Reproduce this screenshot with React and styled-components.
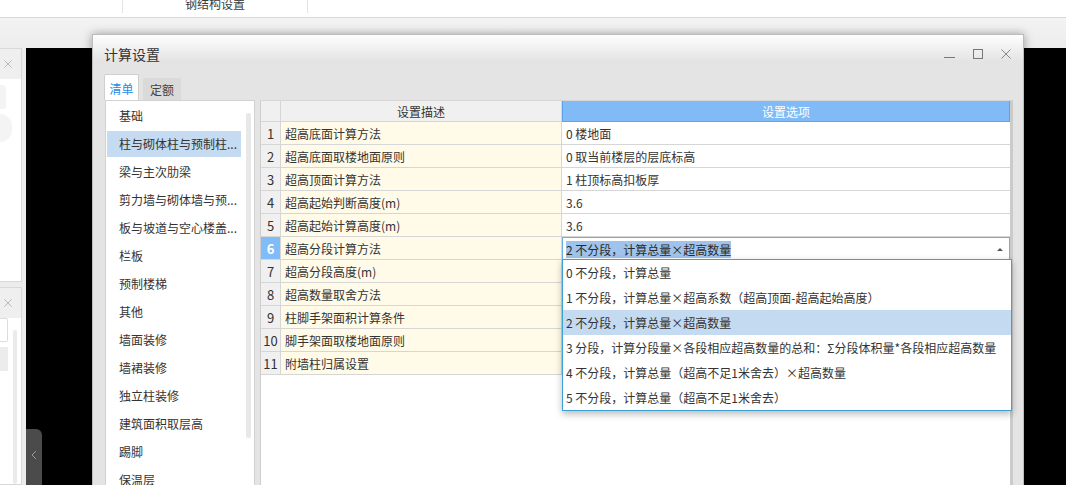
import React from 'react';
import styled, { createGlobalStyle } from 'styled-components';

const GlobalStyle = createGlobalStyle`
  * { box-sizing: border-box; }
  html, body { margin: 0; padding: 0; width: 1066px; height: 485px; overflow: hidden; background: #f0f0f0; }
  body { font-family: "Noto Sans CJK SC", "Microsoft YaHei", sans-serif; font-size: 12px; color: #333; }
  #root { width: 1066px; height: 485px; overflow: hidden; }
`;

const Screen = styled.div`
  position: relative;
  width: 1066px;
  height: 485px;
  display: flex;
  flex-direction: column;
  overflow: hidden;
`;

const TopBar = styled.div`
  height: 18px;
  flex: none;
  background: #fff;
  border-bottom: 1px solid #d9d9d9;
  display: flex;
`;

const TopCell = styled.div`
  width: ${p => p.$w}px;
  height: 13px;
  border-right: 1px solid #e3e3e3;
  display: flex;
  justify-content: center;
  overflow: hidden;
`;

const TopLabel = styled.span`
  font-size: 12px;
  line-height: 12px;
  margin-top: -2px;
  color: #3a3a3a;
  white-space: nowrap;
`;

const Workspace = styled.div`
  flex: 1;
  display: flex;
  gap: 4px;
  padding-top: 30px;
  background: linear-gradient(#f3f3f3, #ececec 31px);
  min-height: 0;
`;

const Dock = styled.div`
  width: 22px;
  flex: none;
  display: flex;
  flex-direction: column;
  gap: 5px;
`;

const DockPanel = styled.div`
  height: ${p => (p.$h ? `${p.$h}px` : 'auto')};
  flex: ${p => (p.$h ? 'none' : '1')};
  background: #fff;
  border: 1px solid #d8d8d8;
  border-left: none;
  display: flex;
  flex-direction: column;
  overflow: hidden;
`;

const DockHeader = styled.div`
  height: 30px;
  flex: none;
  background: #efefef;
  display: flex;
  align-items: center;
  justify-content: flex-end;
  padding-right: 9px;
`;

const DockBody = styled.div`
  flex: 1;
  display: flex;
  gap: 5px;
  padding-top: ${p => p.$pt || 0}px;
`;

const DockStack = styled.div`
  display: flex;
  flex-direction: column;
  gap: 5px;
`;

const GhostBlock = styled.div`
  width: ${p => p.$w}px;
  height: ${p => p.$h}px;
  background: ${p => p.$bg || '#f4f4f4'};
  border: ${p => (p.$bd ? '1px solid #dcdcdc' : 'none')};
  border-left: none;
  border-radius: ${p => p.$r || '0 3px 3px 0'};
`;

const DockScroll = styled.div`
  width: 4px;
  margin-top: 12px;
  background: #ebebeb;
  border-radius: 2px;
`;

const Viewport = styled.div`
  flex: 1;
  position: relative;
  background: #000;
`;

const CollapseTab = styled.div`
  position: absolute;
  left: 0;
  bottom: 0;
  width: 16px;
  height: 56px;
  background: #4b4b4b;
  border-radius: 0 6px 0 0;
  display: flex;
  align-items: center;
  justify-content: center;
  padding-bottom: 4px;
`;

/* ---------- Dialog (floating window) ---------- */

const Dialog = styled.div`
  position: absolute;
  left: 92px;
  top: 34px;
  width: 932px;
  height: 470px;
  border: 1px solid #bcbcbc;
  background: linear-gradient(#fefefe 0, #e4e4e4 26px, #e4e4e4 100%);
  box-shadow: 0 0 9px rgba(0, 0, 0, 0.35);
  display: flex;
  flex-direction: column;
`;

const TitleBar = styled.div`
  height: 37px;
  flex: none;
  display: flex;
  align-items: center;
  padding: 0 12px 0 11px;
`;

const Title = styled.div`
  flex: 1;
  font-size: 14px;
  color: #333;
  line-height: 16px;
  padding-top: 1px;
`;

const Controls = styled.div`
  display: flex;
  gap: 18px;
  align-items: center;
`;

const TabBar = styled.div`
  height: 28px;
  flex: none;
  display: flex;
  align-items: flex-end;
  gap: 4px;
  padding-left: 11px;
`;

const Tab = styled.div`
  height: ${p => (p.$active ? 26 : 22)}px;
  width: ${p => (p.$active ? 35 : 38)}px;
  background: ${p => (p.$active ? '#fff' : '#dadada')};
  border: 1px solid ${p => (p.$active ? '#cfcfcf' : '#dadada')};
  border-bottom: none;
  border-radius: 2px 2px 0 0;
  color: ${p => (p.$active ? '#2a8ae6' : '#444')};
  display: flex;
  align-items: center;
  justify-content: center;
  font-size: 12px;
  padding-top: ${p => (p.$active ? 1 : 0)}px;
`;

const Body = styled.div`
  flex: 1;
  display: flex;
  gap: 5px;
  padding: 0 10px 0 12px;
  min-height: 0;
`;

const ListPanel = styled.div`
  width: 150px;
  flex: none;
  background: #fff;
  border: 1px solid #d2d2d2;
  border-bottom: none;
  display: flex;
`;

const ListItems = styled.div`
  flex: 1;
  padding: 2px 2px 0 1px;
  display: flex;
  flex-direction: column;
  gap: 2px;
`;

const ListItem = styled.div`
  height: 26px;
  flex: none;
  line-height: 26px;
  padding-left: 12px;
  background: ${p => (p.$selected ? '#c4dbf1' : 'transparent')};
  color: #333;
  white-space: nowrap;
  overflow: hidden;
`;

const ScrollTrack = styled.div`
  width: 11px;
  flex: none;
  padding: 12px 3px 0 3px;
`;

const ScrollThumb = styled.div`
  height: 325px;
  background: #e8e8e8;
  border-radius: 2px;
`;

const TablePanel = styled.div`
  flex: 1;
  background: #fff;
  border-left: 1px solid #cdcdcd;
  border-right: 3px solid #cbcbcb;
  border-top: 1px solid #d6d6d6;
  min-width: 0;
`;

const Grid = styled.div`
  display: grid;
  grid-template-columns: 20px 281px 1fr;
`;

const HeadCell = styled.div`
  height: 21px;
  display: flex;
  align-items: center;
  justify-content: center;
  background: ${p => (p.$blue ? '#80bbf7' : '#f0f0f0')};
  color: ${p => (p.$blue ? '#fff' : '#333')};
  border-right: 1px solid ${p => (p.$blue ? '#5ea4ea' : '#d6d6d6')};
  border-bottom: 1px solid ${p => (p.$blue ? '#5ea4ea' : '#d6d6d6')};
  border-left: ${p => (p.$blue ? '1px solid #5ea4ea' : 'none')};
`;

const NumCell = styled.div`
  height: 23px;
  display: flex;
  align-items: center;
  justify-content: center;
  background: ${p => (p.$active ? '#80bcf8' : '#f0f0f0')};
  color: ${p => (p.$active ? '#fff' : '#333')};
  font-weight: ${p => (p.$active ? 700 : 400)};
  border-right: 1px solid #d6d6d6;
  border-bottom: 1px solid #d6d6d6;
  font-size: 13px;
`;

const DescCell = styled.div`
  height: 23px;
  display: flex;
  align-items: center;
  padding-left: 4px;
  background: #fffbe8;
  border-right: 1px solid #d6d6d6;
  border-bottom: 1px solid #d6d6d6;
  white-space: nowrap;
`;

const OptCell = styled.div`
  position: relative;
  height: 23px;
  display: flex;
  align-items: center;
  padding-left: 4px;
  background: #fff;
  border-bottom: 1px solid #d6d6d6;
  white-space: nowrap;
`;

const EditCell = styled.div`
  position: relative;
  z-index: 5;
  height: 23px;
  display: flex;
  align-items: center;
  padding: 0 6px 0 3px;
  background: #fff;
  border: 1px solid #6aaeea;
`;

const Selected = styled.span`
  background: #9fc3ea;
  color: #2a2a2a;
  line-height: 17px;
  height: 17px;
  margin-top: 1px;
`;

const ArrowUp = styled.span`
  margin-left: auto;
  margin-top: 2px;
  width: 0;
  height: 0;
  border-left: 3px solid transparent;
  border-right: 3px solid transparent;
  border-bottom: 3px solid #555;
`;

const Dropdown = styled.div`
  position: absolute;
  left: -1px;
  top: 21px;
  width: 450px;
  background: #fff;
  border: 1px solid #3ba2d9;
  box-shadow: 0 3px 7px rgba(0, 0, 0, 0.28);
  display: flex;
  flex-direction: column;
`;

const DropItem = styled.div`
  height: 25px;
  display: flex;
  align-items: center;
  padding-left: 3px;
  background: ${p => (p.$selected ? '#c4daf0' : '#fff')};
  color: #333;
  white-space: nowrap;
`;

/* ---------- data ---------- */

const listItems = [
  '基础',
  '柱与砌体柱与预制柱...',
  '梁与主次肋梁',
  '剪力墙与砌体墙与预...',
  '板与坡道与空心楼盖...',
  '栏板',
  '预制楼梯',
  '其他',
  '墙面装修',
  '墙裙装修',
  '独立柱装修',
  '建筑面积取层高',
  '踢脚',
  '保温层',
];

// option values of rows 7–11 lie under the open dropdown and are not visible
const rows = [
  ['超高底面计算方法', '0 楼地面'],
  ['超高底面取楼地面原则', '0 取当前楼层的层底标高'],
  ['超高顶面计算方法', '1 柱顶标高扣板厚'],
  ['超高起始判断高度(m)', '3.6'],
  ['超高起始计算高度(m)', '3.6'],
  ['超高分段计算方法', '2 不分段，计算总量×超高数量'],
  ['超高分段高度(m)', ''],
  ['超高数量取舍方法', ''],
  ['柱脚手架面积计算条件', ''],
  ['脚手架面取楼地面原则', ''],
  ['附墙柱归属设置', ''],
];

const options = [
  '0 不分段，计算总量',
  '1 不分段，计算总量×超高系数（超高顶面-超高起始高度）',
  '2 不分段，计算总量×超高数量',
  '3 分段，计算分段量×各段相应超高数量的总和：Σ分段体积量*各段相应超高数量',
  '4 不分段，计算总量（超高不足1米舍去）×超高数量',
  '5 不分段，计算总量（超高不足1米舍去）',
];

const CloseX = ({ size = 8, color = '#aaa' }) => (
  <svg width={size} height={size} viewBox="0 0 10 10">
    <path d="M0.5 0.5 L9.5 9.5 M9.5 0.5 L0.5 9.5" stroke={color} strokeWidth="1" fill="none" />
  </svg>
);

export default function App() {
  return (
    <Screen>
      <GlobalStyle />
      <TopBar>
        <TopCell $w={123} />
        <TopCell $w={185}>
          <TopLabel>钢结构设置</TopLabel>
        </TopCell>
      </TopBar>
      <Workspace>
        <Dock>
          <DockPanel $h={234}>
            <DockHeader>
              <CloseX />
            </DockHeader>
            <DockBody $pt={6}>
              <DockStack>
                <GhostBlock $w={6} $h={24} />
                <GhostBlock $w={12} $h={28} $r="0 14px 14px 0" />
              </DockStack>
            </DockBody>
          </DockPanel>
          <DockPanel>
            <DockHeader>
              <CloseX />
            </DockHeader>
            <DockBody>
              <DockStack>
                <GhostBlock $w={8} $h={24} $bg="#fff" $bd $r="0 2px 2px 0" />
                <GhostBlock $w={8} $h={24} $bg="#ececec" $r="0" />
              </DockStack>
              <DockScroll />
            </DockBody>
          </DockPanel>
        </Dock>
        <Viewport>
          <CollapseTab>
            <svg width="6" height="10" viewBox="0 0 6 10">
              <path d="M5 1 L1 5 L5 9" stroke="#999" strokeWidth="1" fill="none" />
            </svg>
          </CollapseTab>
        </Viewport>
      </Workspace>

      <Dialog>
        <TitleBar>
          <Title>计算设置</Title>
          <Controls>
            <svg width="11" height="10" viewBox="0 0 11 10">
              <path d="M0 8.5 H11" stroke="#777" strokeWidth="1" />
            </svg>
            <svg width="10" height="10" viewBox="0 0 10 10">
              <rect x="0.5" y="0.5" width="9" height="9" stroke="#777" strokeWidth="1" fill="none" />
            </svg>
            <CloseX size={10} color="#888" />
          </Controls>
        </TitleBar>
        <TabBar>
          <Tab $active>清单</Tab>
          <Tab>定额</Tab>
        </TabBar>
        <Body>
          <ListPanel>
            <ListItems>
              {listItems.map((t, i) => (
                <ListItem key={t} $selected={i === 1}>
                  {t}
                </ListItem>
              ))}
            </ListItems>
            <ScrollTrack>
              <ScrollThumb />
            </ScrollTrack>
          </ListPanel>
          <TablePanel>
            <Grid>
              <HeadCell />
              <HeadCell>设置描述</HeadCell>
              <HeadCell $blue>设置选项</HeadCell>
              {rows.map(([desc, opt], i) => {
                const n = i + 1;
                const active = n === 6;
                return (
                  <React.Fragment key={n}>
                    <NumCell $active={active}>{n}</NumCell>
                    <DescCell>{desc}</DescCell>
                    {active ? (
                      <EditCell>
                        <Selected>{opt}</Selected>
                        <ArrowUp />
                        <Dropdown>
                          {options.map((o, k) => (
                            <DropItem key={o} $selected={k === 2}>
                              {o}
                            </DropItem>
                          ))}
                        </Dropdown>
                      </EditCell>
                    ) : (
                      <OptCell>{opt}</OptCell>
                    )}
                  </React.Fragment>
                );
              })}
            </Grid>
          </TablePanel>
        </Body>
      </Dialog>
    </Screen>
  );
}
